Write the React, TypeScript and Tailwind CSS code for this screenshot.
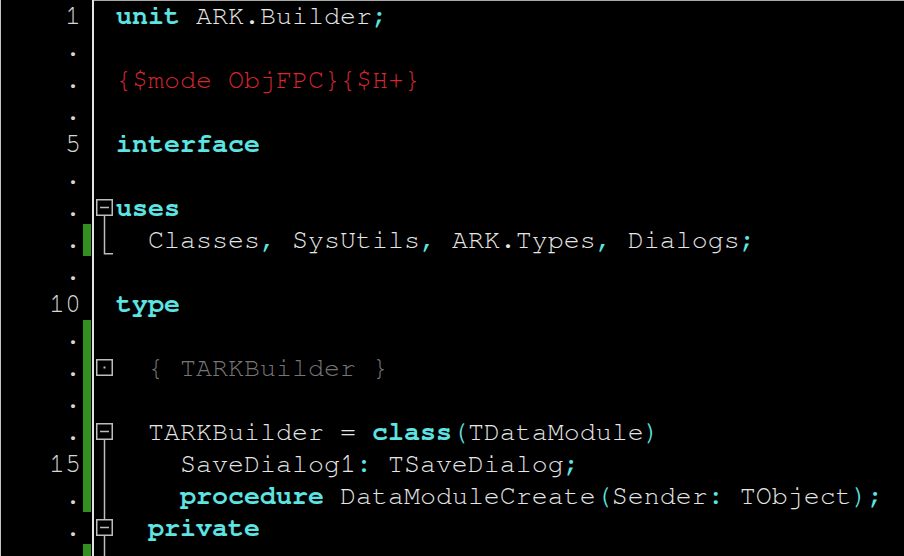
import React from 'react';

type Seg = { t: string; c?: 'kw' | 'sym' | 'dir' | 'cmt' };
type Fold = 'none' | 'open' | 'dot' | 'line' | 'end';

type Row = {
  num: string;
  mod?: boolean;
  fold?: Fold;
  segs: Seg[];
};

const rows: Row[] = [
  { num: '1', segs: [{ t: 'unit', c: 'kw' }, { t: ' ARK.Builder' }, { t: ';', c: 'sym' }] },
  { num: '.', segs: [] },
  { num: '.', segs: [{ t: '{$mode ObjFPC}{$H+}', c: 'dir' }] },
  { num: '.', segs: [] },
  { num: '5', segs: [{ t: 'interface', c: 'kw' }] },
  { num: '.', segs: [] },
  { num: '.', fold: 'open', segs: [{ t: 'uses', c: 'kw' }] },
  {
    num: '.',
    mod: true,
    fold: 'end',
    segs: [
      { t: '  Classes' },
      { t: ',', c: 'sym' },
      { t: ' SysUtils' },
      { t: ',', c: 'sym' },
      { t: ' ARK.Types' },
      { t: ',', c: 'sym' },
      { t: ' Dialogs' },
      { t: ';', c: 'sym' },
    ],
  },
  { num: '.', segs: [] },
  { num: '10', segs: [{ t: 'type', c: 'kw' }] },
  { num: '.', mod: true, segs: [] },
  { num: '.', mod: true, fold: 'dot', segs: [{ t: '  ' }, { t: '{ TARKBuilder }', c: 'cmt' }] },
  { num: '.', mod: true, segs: [] },
  {
    num: '.',
    mod: true,
    fold: 'open',
    segs: [
      { t: '  TARKBuilder = ' },
      { t: 'class', c: 'kw' },
      { t: '(', c: 'sym' },
      { t: 'TDataModule' },
      { t: ')', c: 'sym' },
    ],
  },
  {
    num: '15',
    mod: true,
    fold: 'line',
    segs: [
      { t: '    SaveDialog1' },
      { t: ':', c: 'sym' },
      { t: ' TSaveDialog' },
      { t: ';', c: 'sym' },
    ],
  },
  {
    num: '.',
    mod: true,
    fold: 'line',
    segs: [
      { t: '    ' },
      { t: 'procedure', c: 'kw' },
      { t: ' DataModuleCreate' },
      { t: '(', c: 'sym' },
      { t: 'Sender' },
      { t: ':', c: 'sym' },
      { t: ' TObject' },
      { t: ');', c: 'sym' },
    ],
  },
  { num: '.', fold: 'open', segs: [{ t: '  ' }, { t: 'private', c: 'kw' }] },
  { num: '', mod: true, fold: 'line', segs: [] },
];

const segClass: Record<string, string> = {
  kw: 'font-bold text-[#5ee3e3]',
  sym: 'text-[#5ee3e3]',
  dir: 'text-[#d8262c]',
  cmt: 'text-[#767676]',
};

// fold gutter glyphs, 22x32 per row
const FoldMark = ({ kind, prevOpen }: { kind: Fold; prevOpen: boolean }) => {
  const stroke = '#bdbdbd';
  if (kind === 'none') return null;
  return (
    <svg width="22" height="32" viewBox="0 0 22 32" className="block">
      {(kind === 'open' || kind === 'dot') && (
        <rect x="2.75" y="7.75" width="15.5" height="15.5" fill="none" stroke={stroke} strokeWidth="1.5" />
      )}
      {kind === 'open' && <line x1="6" y1="15.5" x2="15" y2="15.5" stroke={stroke} strokeWidth="1.5" />}
      {kind === 'dot' && <rect x="9.5" y="14.5" width="2" height="2" fill={stroke} />}
      {kind === 'open' && <line x1="10.5" y1="23.5" x2="10.5" y2="32" stroke={stroke} strokeWidth="1.5" />}
      {kind === 'open' && prevOpen && <line x1="10.5" y1="0" x2="10.5" y2="7.5" stroke={stroke} strokeWidth="1.5" />}
      {kind === 'line' && <line x1="10.5" y1="0" x2="10.5" y2="32" stroke={stroke} strokeWidth="1.5" />}
      {kind === 'end' && (
        <path d="M10.5 0 V29.75 H19" fill="none" stroke={stroke} strokeWidth="1.5" />
      )}
    </svg>
  );
};

const App: React.FC = () => {
  return (
    <div
      className="relative w-[904px] h-[556px] overflow-hidden bg-black border-l border-[#c4c4c4] text-[26.667px] leading-[32px] whitespace-pre"
      style={{ fontFamily: '"Nimbus Mono PS", "Nimbus Mono L", "FreeMono", "Courier New", "Liberation Mono", monospace' }}
    >
      {/* top edge of the text area */}
      <div className="absolute top-0 left-[93px] right-0 h-px bg-[#a8a8a8]" />

      {rows.map((row, i) => (
        <div key={i} className="flex h-[32px]">
          {/* line numbers */}
          <div className="w-[82px] pr-[2px] text-right text-[#d6d6d6]">{row.num}</div>
          {/* modified marker */}
          <div className={`w-[8px] ${row.mod ? 'bg-[#33901f]' : ''}`} />
          <div className="w-px" />
          {/* gutter separator */}
          <div className="w-[2px] bg-[#e4e4e4]" />
          {/* fold column */}
          <div className="w-[22px]">
            <FoldMark kind={row.fold ?? 'none'} prevOpen={i === 16} />
          </div>
          {/* code */}
          <div className="flex-1 text-[#e6e6e6]">
            {row.segs.map((s, j) => (
              <span key={j} className={s.c ? segClass[s.c] : ''}>
                {s.t}
              </span>
            ))}
          </div>
        </div>
      ))}
    </div>
  );
};

export default App;
